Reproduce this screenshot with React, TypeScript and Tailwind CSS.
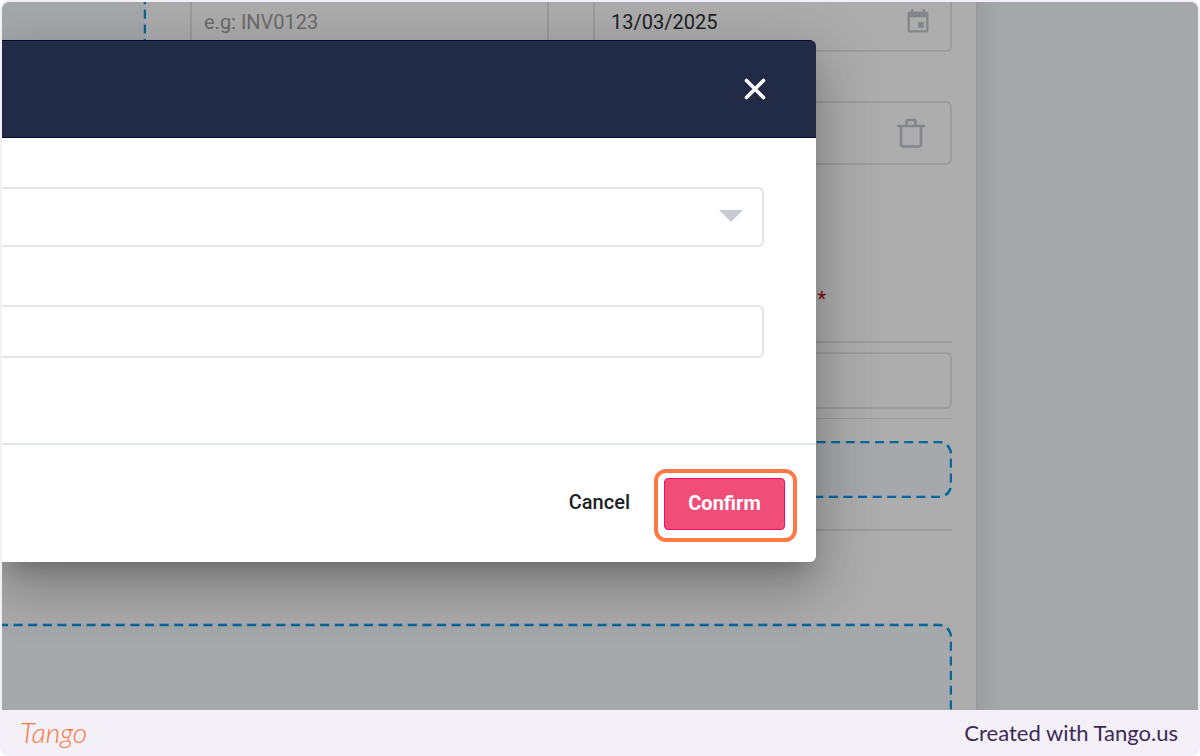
import { useState } from 'react';
import { MdEvent } from 'react-icons/md';

function DashedOutline({ shape }: { shape: string }) {
  return (
    <svg className="absolute inset-0 w-full h-full" fill="none" aria-hidden="true">
      <rect
        className={shape}
        rx="12"
        stroke="#0a6699"
        strokeWidth="2.5"
        strokeDasharray="9 5.6"
        strokeDashoffset="3"
      />
    </svg>
  );
}

function TrashIcon() {
  return (
    <svg width="28" height="30" viewBox="0 0 28 30" fill="none" stroke="#83878b" strokeWidth="2.6" aria-hidden="true">
      <path d="M0 8h28" />
      <path d="M4 8v18q0 2.500 2.500 2.500h15q2.500 0 2.500-2.500V8" />
      <path d="M9.500 8V4q0-2 2-2h5q2 0 2 2v4" />
    </svg>
  );
}

function InvoiceForm() {
  const [date, setDate] = useState('13/03/2025');

  return (
    <div className="flex-1 min-w-0 flex flex-col pr-6 bg-[#adadad] border-r border-[#999b9b]">
      <div className="flex gap-11 h-[50px]">
        <div className="relative flex-1 bg-[#a5a9ac]">
          <DashedOutline shape="[x:-12px] [y:-12px] w-[calc(100%+11px)] h-[100px]" />
        </div>
        <input
          type="text"
          aria-label="Invoice number"
          placeholder="e.g: INV0123"
          className="w-[359px] pl-3 pb-2 border-2 border-t-0 border-[#9c9c9c] rounded-b-md text-xl placeholder:text-[#6c6c6c] outline-none"
        />
        <div className="w-[359px] flex items-center pl-4 pr-[18px] pb-2 border-2 border-t-0 border-[#9c9c9c] rounded-b-md">
          <input
            type="text"
            aria-label="Invoice date"
            value={date}
            onChange={(e) => setDate(e.target.value)}
            className="flex-1 min-w-0 text-xl text-[#1d1f26] outline-none"
          />
          <button type="button" aria-label="Open calendar">
            <MdEvent className="w-7 h-7 text-[#83878b]" />
          </button>
        </div>
      </div>

      <div className="flex items-center justify-end h-16 mt-[49px] pr-[25px] border-2 border-l-0 border-[#9c9c9c] rounded-r-md">
        <button type="button" aria-label="Delete line">
          <TrashIcon />
        </button>
      </div>

      <div className="flex justify-end mt-[120px] pr-[126px] h-14 text-xl text-[#8b0a14]">*</div>

      <div className="border-t-2 border-b border-[#9c9c9c] py-[9px]">
        <div className="h-[57px] border-2 border-l-0 border-[#9c9c9c] rounded-r-md" />
      </div>

      <div className="relative h-[57px] mt-[22px] bg-[#a5a9ac] rounded-r-xl">
        <DashedOutline shape="[x:-12px] [y:1px] w-[calc(100%+11px)] h-[55px]" />
      </div>
      <div className="mt-[31px] border-t-2 border-[#9c9c9c]" />

      <div className="relative flex-1 min-h-20 mt-[92px] bg-[#a5a9ac] rounded-tr-xl">
        <DashedOutline shape="[x:-12px] [y:2px] w-[calc(100%+11px)] h-[calc(100%+20px)]" />
      </div>
    </div>
  );
}

function ConfirmDialog() {
  return (
    <div
      role="dialog"
      className="absolute left-0 right-[382px] top-[38px] bg-white rounded-r-md shadow-[0_15px_20px_-9px_rgba(0,0,0,0.2),0_32px_51px_4px_rgba(0,0,0,0.14),0_12px_61px_11px_rgba(0,0,0,0.12)]"
    >
      <div className="flex items-center justify-end h-[98px] pr-[50px] bg-[#222b45] border-y border-[#05082e] rounded-tr-md">
        <button type="button" aria-label="Close">
          <svg width="22" height="22" viewBox="0 0 22 22" stroke="white" strokeWidth="3.6" strokeLinecap="round">
            <path d="M2.500 2.500l17 17M19.500 2.500l-17 17" />
          </svg>
        </button>
      </div>

      <div className="pt-[49px] pr-[52px] pb-[85px]">
        <div className="relative">
          <select
            aria-label="Type"
            className="block appearance-none w-full h-[60px] border-2 border-l-0 border-[#e4e4e6] rounded-r-md outline-none"
          >
            <option value=""></option>
          </select>
          <svg
            className="absolute right-[21px] top-[23px] pointer-events-none"
            width="24"
            height="12"
            viewBox="0 0 24 12"
            fill="#c5cad3"
            aria-hidden="true"
          >
            <path d="M0 0h24L12 12z" />
          </svg>
        </div>
        <input
          type="text"
          aria-label="Details"
          className="block w-full h-[53px] mt-[58px] px-4 text-xl border-2 border-l-0 border-[#e4e4e6] rounded-r-md outline-none"
        />
      </div>

      <div className="flex items-start justify-end gap-6 h-[119px] pt-6 pr-[19px] border-t-2 border-[#e1e4e9]">
        <button type="button" className="h-[66px] text-xl font-medium text-[#1d1f26]">
          Cancel
        </button>
        <div className="pt-[5px] pr-2 pb-2 pl-1.5 border-4 border-[#ff7742] rounded-xl">
          <button
            type="button"
            className="block w-[121px] h-[52px] pb-0.5 bg-[#f04e78] border border-[#ee0f63] rounded text-xl font-bold text-white"
          >
            Confirm
          </button>
        </div>
      </div>
    </div>
  );
}

export default function App() {
  return (
    <div className="min-h-screen flex flex-col bg-[#f3f1f7] rounded-lg font-['Roboto',sans-serif]">
      <div className="relative flex-1 flex mt-0.5 mx-0.5 rounded-t-lg overflow-hidden">
        <InvoiceForm />
        <div className="w-[221px] bg-[#a6a7a9] bg-linear-to-r from-[#9b9d9f] to-[#a6a7a9] to-10%" />
        <ConfirmDialog />
      </div>

      <footer className="flex items-center justify-between h-[46px] pl-5 pr-[22px] pb-0.5">
        <a href="#" className="font-['Lato',sans-serif] text-[28px] italic font-light text-[#ff7442]">
          Tango
        </a>
        <span className="font-['Lato',sans-serif] text-[22px] text-[#3d2a54]">Created with Tango.us</span>
      </footer>
    </div>
  );
}
